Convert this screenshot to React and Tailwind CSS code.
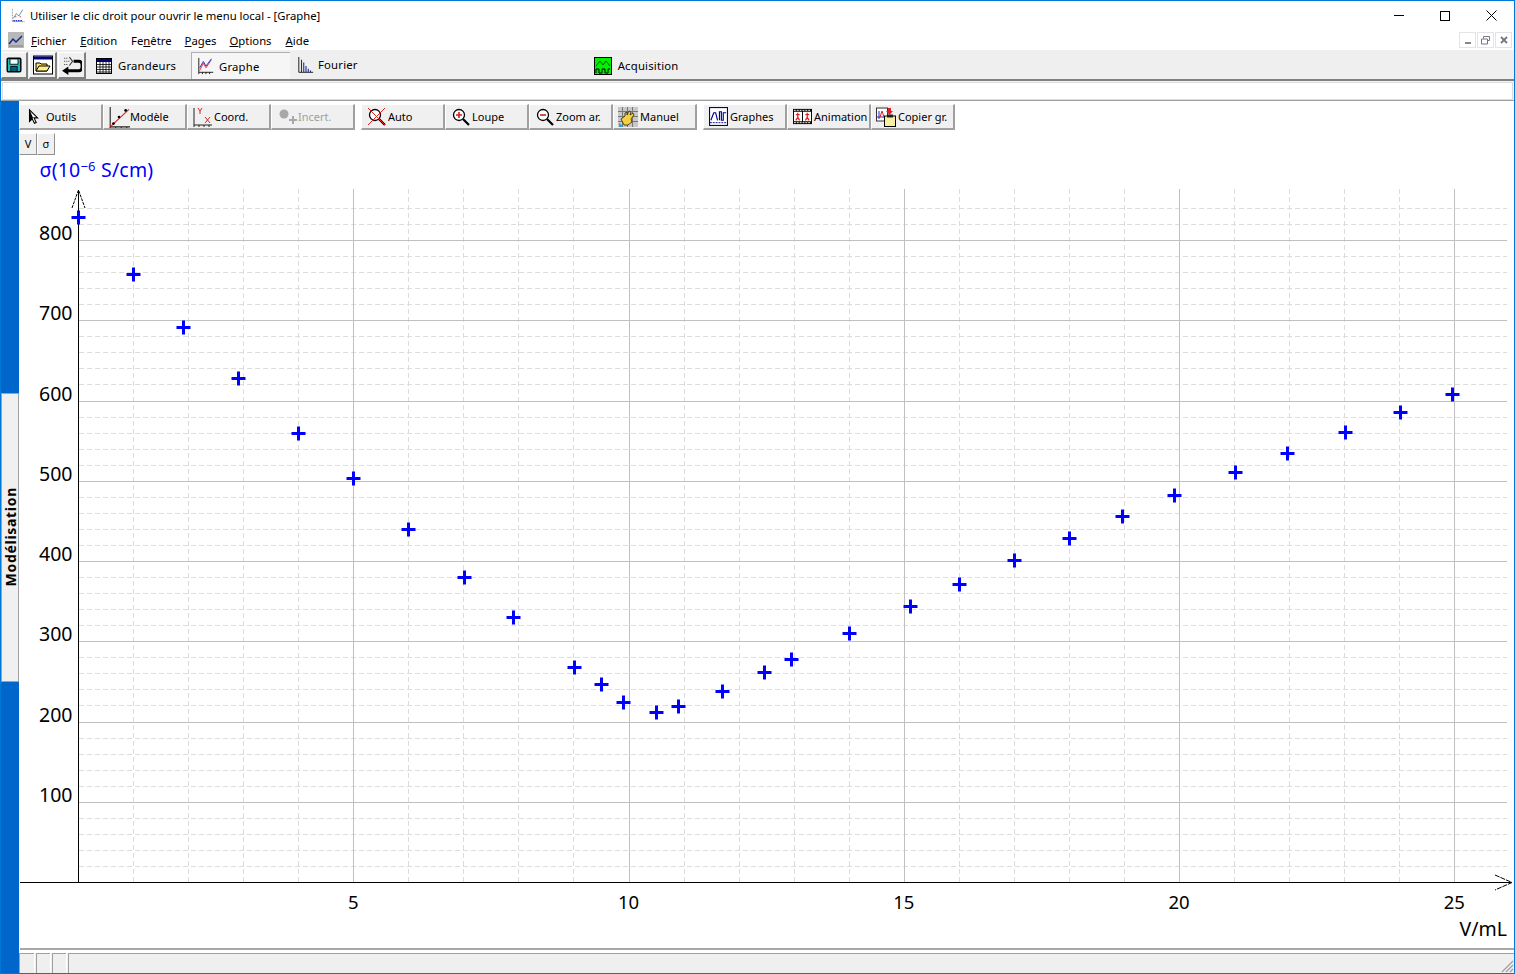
import React from 'react';

const points = [
  [78, 217], [133, 274], [183, 327], [238, 378], [298, 433], [353, 478], [408, 529], [464, 577],
  [513, 617], [574, 667], [601, 684], [623, 702], [656, 712], [678, 706], [722, 691], [764, 672],
  [791, 659], [849, 633], [910, 606], [959, 584], [1014, 560], [1069, 538], [1122, 516], [1174, 495],
  [1235, 472], [1287, 453], [1345, 432], [1400, 412], [1452, 394],
];

const x0 = 78.5;
const xStep = 55.05;
const y0 = 882;
const yStep = 16.05;

const Ic = ({ s = 20, children }) => (
  <svg width={s} height={s} viewBox="0 0 20 20" className="shrink-0" fill="none">{children}</svg>
);

const AppIcon = () => (
  <Ic s={16}>
    <path d="M3 1v16h15" stroke="#667" strokeDasharray="1 1" />
    <path d="M4 13l4-6 3 3 5-8" stroke="#3a7d9a" />
    <path d="M4 16h12" stroke="#2233cc" strokeWidth="2" strokeDasharray="2 1" />
    <path d="M6 11h2M12 11h2" stroke="#cc2222" />
  </Ic>
);

const MenuIcon = () => (
  <svg width="16" height="16" viewBox="0 0 16 16" className="shrink-0">
    <rect width="16" height="16" fill="#b8b8b8" />
    <path d="M1 12l4-5 3 3 6-6" stroke="#1a2a8a" strokeWidth="1.5" fill="none" />
    <path d="M1 14h14" stroke="#808080" />
  </svg>
);

const SaveIcon = () => (
  <Ic s={16}>
    <rect x="1.500" y="1.500" width="17" height="17" rx="1.500" fill="#20b8b8" stroke="#000" strokeWidth="1.800" />
    <rect x="5" y="2.500" width="10" height="6.500" fill="#e8ffff" stroke="#000" />
    <rect x="6" y="12" width="8" height="6" fill="#006080" stroke="#000" />
  </Ic>
);

const OpenIcon = () => (
  <Ic>
    <rect x="0.500" y="1" width="19" height="18" fill="#fff" stroke="#000" />
    <rect x="1" y="1.500" width="18" height="3" fill="#000080" />
    <path d="M3 16V8h4l1 1h6v7z" fill="#ffe070" stroke="#000" />
    <path d="M3 16l3-5h11l-3 5z" fill="#fff080" stroke="#000" />
  </Ic>
);

const BackIcon = () => (
  <Ic s={21}>
    <path d="M3 3h4M3 6h6M3 9h4" stroke="#444" strokeDasharray="1 1" />
    <path d="M8 2l3 4-3 4" stroke="#333" />
    <path d="M12 6h5a3 3 0 0 1 3 3v3a3 3 0 0 1-3 3H6" stroke="#000" strokeWidth="2.800" />
    <path d="M7 11l-6 4 6 4z" fill="#000" />
  </Ic>
);

const TableIcon = () => (
  <svg width="16" height="16" viewBox="0 0 16 16" className="shrink-0">
    <rect x="0.500" y="0.500" width="15" height="15" fill="#fff" stroke="#000" />
    <rect x="1" y="1" width="14" height="3" fill="#000080" />
    <path d="M1 6.500h14M1 9h14M1 11.500h14M1 14h14M4 4v11M7 4v11M10 4v11M13 4v11" stroke="#000" strokeWidth="0.800" />
  </svg>
);

const GraphIcon = () => (
  <Ic s={18}>
    <path d="M2 1v16h16" stroke="#111" />
    <path d="M2 17v2M6 17v2M10 17v2M14 17v2" stroke="#111" />
    <path d="M3 15l4-8 3 5 6-9" stroke="#ee2222" />
    <path d="M3 12l4-7 3 5 6-8" stroke="#2222cc" />
  </Ic>
);

const BarsIcon = () => (
  <Ic s={18}>
    <path d="M2 0v17h16" stroke="#111" />
    <path d="M5 17V3M7.500 17V6M10 17V10M12.500 17v-4M15 17v-2" stroke="#1a2a8a" strokeWidth="1.200" />
  </Ic>
);

const AcqIcon = () => (
  <svg width="18" height="18" viewBox="0 0 18 18" className="shrink-0">
    <rect x="0.500" y="0.500" width="17" height="17" fill="#00f000" stroke="#000" />
    <path d="M2 9l4-5 3 4 3-4 4 5" stroke="#006000" fill="none" />
    <path d="M2 16V12h3v4h3v-4h3v4h3v-4h2" stroke="#000" fill="none" />
  </svg>
);

const CursorIcon = () => (
  <Ic s={18}>
    <path d="M5 2v13l3-3 2.500 5 2-1-2.500-5h4z" fill="#fff" stroke="#000" strokeWidth="1.200" />
    <path d="M5 2v13l3-3 1-1z" fill="#000" />
  </Ic>
);

const ModelIcon = () => (
  <Ic s={22}>
    <path d="M2 1v18h18" stroke="#222" />
    <path d="M2 19v2M7 19v2M12 19v2M17 19v2" stroke="#222" />
    <path d="M2 19L19 3" stroke="#e02020" />
    <circle cx="5" cy="16" r="1.200" fill="#000" />
    <circle cx="10" cy="10" r="1.200" fill="#000" />
    <circle cx="16" cy="4" r="1.200" fill="#000" />
  </Ic>
);

const CoordIcon = () => (
  <svg width="20" height="20" viewBox="0 0 20 20" className="shrink-0" fill="none">
    <path d="M1 1v17h18" stroke="#222" />
    <path d="M1 18v2M6 18v2M11 18v2M16 18v2" stroke="#222" />
    <path d="M5 1l2 3 2-3M7 4v3" stroke="#e02020" />
    <path d="M12 10l5 6M17 10l-5 6" stroke="#e02020" />
  </svg>
);

const IncertIcon = () => (
  <Ic>
    <circle cx="6" cy="7" r="4.500" fill="#a8a8a8" />
    <path d="M15 9v8M11 13h8" stroke="#a8a8a8" strokeWidth="2" />
  </Ic>
);

const Lens = ({ children }) => (
  <Ic>
    <circle cx="8" cy="8" r="5.500" fill="#fff" stroke="#000" strokeWidth="1.300" />
    <path d="M12 12l6 6" stroke="#000" strokeWidth="2.200" />
    {children}
  </Ic>
);

const AutoIcon = () => (
  <Lens><path d="M1 1l17 17M18 1L1 18" stroke="#e02020" strokeWidth="1" /></Lens>
);

const LoupeIcon = () => (
  <Lens><path d="M8 5v6M5 8h6" stroke="#d02020" strokeWidth="1.600" /></Lens>
);

const ZoomOutIcon = () => (
  <Lens><path d="M5 8h6" stroke="#d02020" strokeWidth="1.600" /></Lens>
);

const HandIcon = () => (
  <Ic>
    <rect width="20" height="20" fill="#c8c8c8" />
    <path d="M0 4.500h20M0 9.500h20M0 14.500h20M4.500 0v20M9.500 0v20M14.500 0v20" stroke="#777" />
    <path d="M3 12l4-3V6l2-1v3l2-4 2 1-1 3 3-2 1 2-3 4 1 3-4 3H6z" fill="#f4d040" stroke="#222" strokeWidth="0.800" />
    <path d="M1 16l4 3-2 1H1z" fill="#20a0e0" />
  </Ic>
);

const GraphesIcon = () => (
  <Ic s={19}>
    <rect x="0.500" y="0.500" width="19" height="19" fill="#fff" stroke="#000080" strokeWidth="1.300" />
    <path d="M2 14l3-8h2l2 8M11 14V5h2v9h2V6h3" stroke="#000080" strokeWidth="1.200" />
    <path d="M1 16.500h18" stroke="#000080" strokeDasharray="2 1" />
  </Ic>
);

const AnimIcon = () => (
  <Ic s={19}>
    <rect y="2" width="20" height="16" fill="#000" />
    <path d="M1 3.500h18M1 16.500h18" stroke="#fff" strokeDasharray="2 1" />
    <rect x="1" y="5" width="8.500" height="10" fill="#fff" />
    <rect x="10.500" y="5" width="8.500" height="10" fill="#fff" />
    <path d="M5 6v5l-2 3M5 11l2 3M3 8h4M15 6v5l-2 3M15 11l2 3M13 8h4" stroke="#e02020" strokeWidth="1.300" />
  </Ic>
);

const CopyIcon = () => (
  <Ic>
    <rect x="0.500" y="1" width="11" height="13" fill="#fff" stroke="#333" />
    <path d="M3 12V4M1 10h9" stroke="#2222cc" />
    <path d="M4 10l2-6 2 6" stroke="#e02020" />
    <rect x="8.500" y="9" width="11" height="10.500" fill="#f8f0a0" stroke="#000" />
    <rect x="11" y="7.500" width="6" height="3" fill="#222" />
    <path d="M12 1h3v3h2l-3.500 4L10 4h2z" fill="#e02020" />
  </Ic>
);

const toolGroups = [
  [
    { label: 'Outils', icon: <CursorIcon />, pad: 'pl-[5px] gap-[3px]' },
    { label: 'Modèle', icon: <ModelIcon />, pad: 'pl-[4px] gap-0' },
    { label: 'Coord.', icon: <CoordIcon />, pad: 'pl-[5px] gap-[1px]' },
    { label: 'Incert.', icon: <IncertIcon />, pad: 'pl-[6px] gap-0', off: true },
  ],
  [
    { label: 'Auto', icon: <AutoIcon />, pad: 'pl-[5px] gap-[1px]' },
    { label: 'Loupe', icon: <LoupeIcon />, pad: 'pl-[5px] gap-[1px]' },
    { label: 'Zoom ar.', icon: <ZoomOutIcon />, pad: 'pl-[5px] gap-[1px]' },
    { label: 'Manuel', icon: <HandIcon />, pad: 'pl-[4px] gap-[2px]' },
  ],
  [
    { label: 'Graphes', icon: <GraphesIcon />, pad: 'pl-[5px] gap-[2px]' },
    { label: 'Animation', icon: <AnimIcon />, pad: 'pl-[5px] gap-[2px]' },
    { label: 'Copier gr.', icon: <CopyIcon />, pad: 'pl-[4px] gap-[2px]' },
  ],
];

const ToolButton = ({ label, icon, pad, off }) => (
  <button
    className={`flex h-[26px] w-[84px] items-center border-t border-l border-t-white border-l-white border-r-2 border-b-2 border-r-[#a0a0a0] border-b-[#a0a0a0] bg-[#f0f0f0] text-[11px] ${pad} ${off ? 'text-[#a0a0a0]' : 'text-black'}`}
  >
    {icon}
    <span className="mt-[1px]">{label}</span>
  </button>
);

const ChromeButton = ({ children }) => (
  <div className="flex h-[27px] items-center justify-center border-t border-l border-t-white border-l-white border-r-2 border-b-2 border-r-[#808080] border-b-[#808080] bg-[#f0f0f0]">
    {children}
  </div>
);

const MdiButton = ({ children }) => (
  <div className="flex h-[16px] w-[17px] items-center justify-center border border-[#e4e4e4]">{children}</div>
);

const Graph = () => {
  const majorX = [5, 10, 15, 20, 25];
  const minorX = Array.from({ length: 26 }, (_, i) => i).filter((i) => i > 0 && i % 5 !== 0);
  const hLines = Array.from({ length: 42 }, (_, i) => i + 1);
  return (
    <svg viewBox="19 155 1495 793" width="1495" height="793" className="block" style={{ fontFamily: '"Noto Sans", sans-serif' }}>
      {minorX.map((i) => (
        <line key={i} x1={Math.floor(x0 + i * xStep) + 0.5} x2={Math.floor(x0 + i * xStep) + 0.5} y1="189" y2="882" stroke="#dcdcdc" strokeDasharray="5 3" />
      ))}
      {hLines.map((i) =>
        i % 5 === 0 ? (
          <line key={i} x1="79" x2="1507" y1={Math.round(y0 - i * yStep) + 0.5} y2={Math.round(y0 - i * yStep) + 0.5} stroke="#c0c0c0" />
        ) : (
          <line key={i} x1="79" x2="1507" y1={Math.round(y0 - i * yStep) + 0.5} y2={Math.round(y0 - i * yStep) + 0.5} stroke="#dcdcdc" strokeDasharray="5 3" />
        )
      )}
      {majorX.map((v) => (
        <line key={v} x1={Math.floor(x0 + v * xStep) + 0.5} x2={Math.floor(x0 + v * xStep) + 0.5} y1="189" y2="882" stroke="#c0c0c0" />
      ))}

      <line x1="78.5" x2="78.5" y1="190" y2="882" stroke="#000" />
      <line x1="20" x2="1511" y1="882.5" y2="882.5" stroke="#000" />
      <path d="M72 208l6.500-18 6.500 18" stroke="#000" fill="none" strokeDasharray="3 1" />
      <path d="M1495 875l17 7.500-17 7.500" stroke="#000" fill="none" strokeDasharray="5 1" />

      <text x="39.500" y="177" fontSize="19.500" letterSpacing="0.200" fill="#0000ff">
        σ(10<tspan dy="-6" fontSize="13">−6</tspan><tspan dy="6"> S/cm)</tspan>
      </text>

      {[800, 700, 600, 500, 400, 300, 200, 100].map((v) => (
        <text key={v} x="72.500" y={y0 - (v / 100) * 80.25} textAnchor="end" fontSize="19.500" fill="#000">{v}</text>
      ))}
      {majorX.map((v) => (
        <text key={v} x={x0 + v * xStep - 0.5} y="908.500" textAnchor="middle" fontSize="18.500" fill="#000">{v}</text>
      ))}
      <text x="1507" y="936" textAnchor="end" fontSize="19.500" fill="#000">V/mL</text>

      {points.map(([x, y]) => (
        <path key={x} d={`M${x - 6.5} ${y + 0.5}h14M${x + 0.5} ${y - 6.5}v14`} stroke="#0000ff" strokeWidth="3" />
      ))}
    </svg>
  );
};

const App = () => {
  return (
    <div
      className="flex h-[974px] w-[1515px] flex-col overflow-hidden border border-[#0078d7] bg-white text-black"
      style={{ fontFamily: '"Noto Sans", sans-serif' }}
    >
      {/* title bar */}
      <div className="flex h-[29px] shrink-0 items-center pl-[9px]">
        <AppIcon />
        <span className="ml-[4px] mt-[1px] text-[11.300px]">Utiliser le clic droit pour ouvrir le menu local - [Graphe]</span>
        <div className="ml-auto flex items-center">
          <div className="flex w-[46px] justify-center"><div className="h-px w-[10px] bg-black" /></div>
          <div className="flex w-[46px] justify-center"><div className="h-[10px] w-[10px] border border-black" /></div>
          <div className="flex w-[46px] justify-center">
            <svg width="11" height="11" viewBox="0 0 11 11"><path d="M0.500 0.500l10 10M10.500 0.500l-10 10" stroke="#000" /></svg>
          </div>
        </div>
      </div>

      {/* menu */}
      <div className="flex h-[20px] shrink-0 items-center pl-[7px] text-[11.300px]">
        <MenuIcon />
        <span className="ml-[7px] mt-[2px]"><u>F</u>ichier</span>
        <span className="ml-[14px] mt-[2px]"><u>E</u>dition</span>
        <span className="ml-[14px] mt-[2px]">Fe<u>n</u>être</span>
        <span className="ml-[13px] mt-[2px]"><u>P</u>ages</span>
        <span className="ml-[13px] mt-[2px]"><u>O</u>ptions</span>
        <span className="ml-[14px] mt-[2px]"><u>A</u>ide</span>
        <div className="ml-auto flex gap-px pr-[2px]">
          <MdiButton><div className="mt-[6px] h-[2px] w-[6px] bg-[#808890]" /></MdiButton>
          <MdiButton>
            <svg width="9" height="9" viewBox="0 0 9 9" fill="none"><path d="M2.500 2.500V0.500h6v4H6.500M0.500 3h6v5h-6z" stroke="#707880" /></svg>
          </MdiButton>
          <MdiButton>
            <svg width="8" height="8" viewBox="0 0 8 8"><path d="M1 1l6 6M7 1l-6 6" stroke="#707880" strokeWidth="1.800" /></svg>
          </MdiButton>
        </div>
      </div>

      {/* tabs */}
      <div className="flex h-[29px] shrink-0 items-end bg-[#efefef] text-[11.300px] tracking-[0.2px]">
        <div className="grid h-[27px] grid-cols-[27px_28px_28px] gap-px">
          <ChromeButton><SaveIcon /></ChromeButton>
          <ChromeButton><OpenIcon /></ChromeButton>
          <ChromeButton><BackIcon /></ChromeButton>
        </div>
        <div className="ml-[10px] flex h-[27px] w-[95px] items-center gap-[6px]">
          <TableIcon /><span className="mt-[1px]">Grandeurs</span>
        </div>
        <div className="flex h-[27px] w-[99px] items-center gap-[4px] border-t border-l border-[#b0b0b0] bg-[#f6f6f6] pl-[5px]">
          <GraphIcon /><span className="mt-[2px]">Graphe</span>
        </div>
        <div className="ml-[7px] flex h-[27px] items-center gap-[3px]">
          <BarsIcon /><span className="-mt-[1px]">Fourier</span>
        </div>
        <div className="ml-[236px] flex h-[27px] items-center gap-[6px]">
          <AcqIcon /><span className="mt-[1px]">Acquisition</span>
        </div>
      </div>

      {/* formula line */}
      <div className="h-[22px] shrink-0 border-t-2 border-b border-t-[#808080] border-b-[#a0a0a0] bg-[#f4f4f4] px-[1px] pt-px">
        <div className="h-[18px] border border-[#dcdcdc] bg-white" />
      </div>

      <div className="flex min-h-0 flex-1">
        {/* side strip */}
        <div className="flex w-[18px] shrink-0 items-center bg-[#0066cc]">
          <div className="flex h-[289px] w-[18px] items-center justify-center border border-[#a0a0a0] bg-[#f0f0f0]">
            <span className="rotate-180 text-[14px] font-bold tracking-[0.7px] [writing-mode:vertical-rl]">Modélisation</span>
          </div>
        </div>

        <div className="flex min-w-0 flex-1 flex-col">
          <div className="flex h-[29px] shrink-0 items-end">
            {toolGroups.map((group, i) => (
              <div key={i} className={`flex ${i > 0 ? 'ml-[6px]' : ''}`}>
                {group.map((b) => <ToolButton key={b.label} {...b} />)}
              </div>
            ))}
          </div>
          <div className="flex h-[25px] shrink-0 items-end text-[11px]">
            <div className="flex h-[22px] w-[18px] items-center justify-center border-t border-l border-t-white border-l-white border-r border-b border-r-[#909090] border-b-[#909090] bg-[#f0f0f0]">V</div>
            <div className="flex h-[22px] w-[18px] items-center justify-center border-t border-l border-t-white border-l-white border-r border-b border-r-[#909090] border-b-[#909090] bg-[#f0f0f0]">σ</div>
          </div>
          <Graph />
          {/* status bar */}
          <div className="mt-auto flex h-[25px] flex-1 flex-col">
            <div className="ml-px h-[3px] shrink-0 border-t-2 border-[#a8a8a8]" />
            <div className="mt-[2px] flex flex-1 gap-[2px] bg-[#efefef]">
              <div className="w-[15px] border-t border-l border-[#a0a0a0] shadow-[1px_0_0_#fff]" />
              <div className="w-[14px] border-t border-l border-[#a0a0a0] shadow-[1px_0_0_#fff]" />
              <div className="w-[14px] border-t border-l border-[#a0a0a0] shadow-[1px_0_0_#fff]" />
              <div className="flex flex-1 items-end justify-end border-t border-l border-[#a0a0a0]">
                <svg width="13" height="13" viewBox="0 0 13 13"><path d="M12 1L1 12M12 5l-7 7M12 9l-3 3" stroke="#a0a0a0" strokeWidth="1.300" /></svg>
              </div>
            </div>
          </div>
        </div>
      </div>
    </div>
  );
};

export default App;
